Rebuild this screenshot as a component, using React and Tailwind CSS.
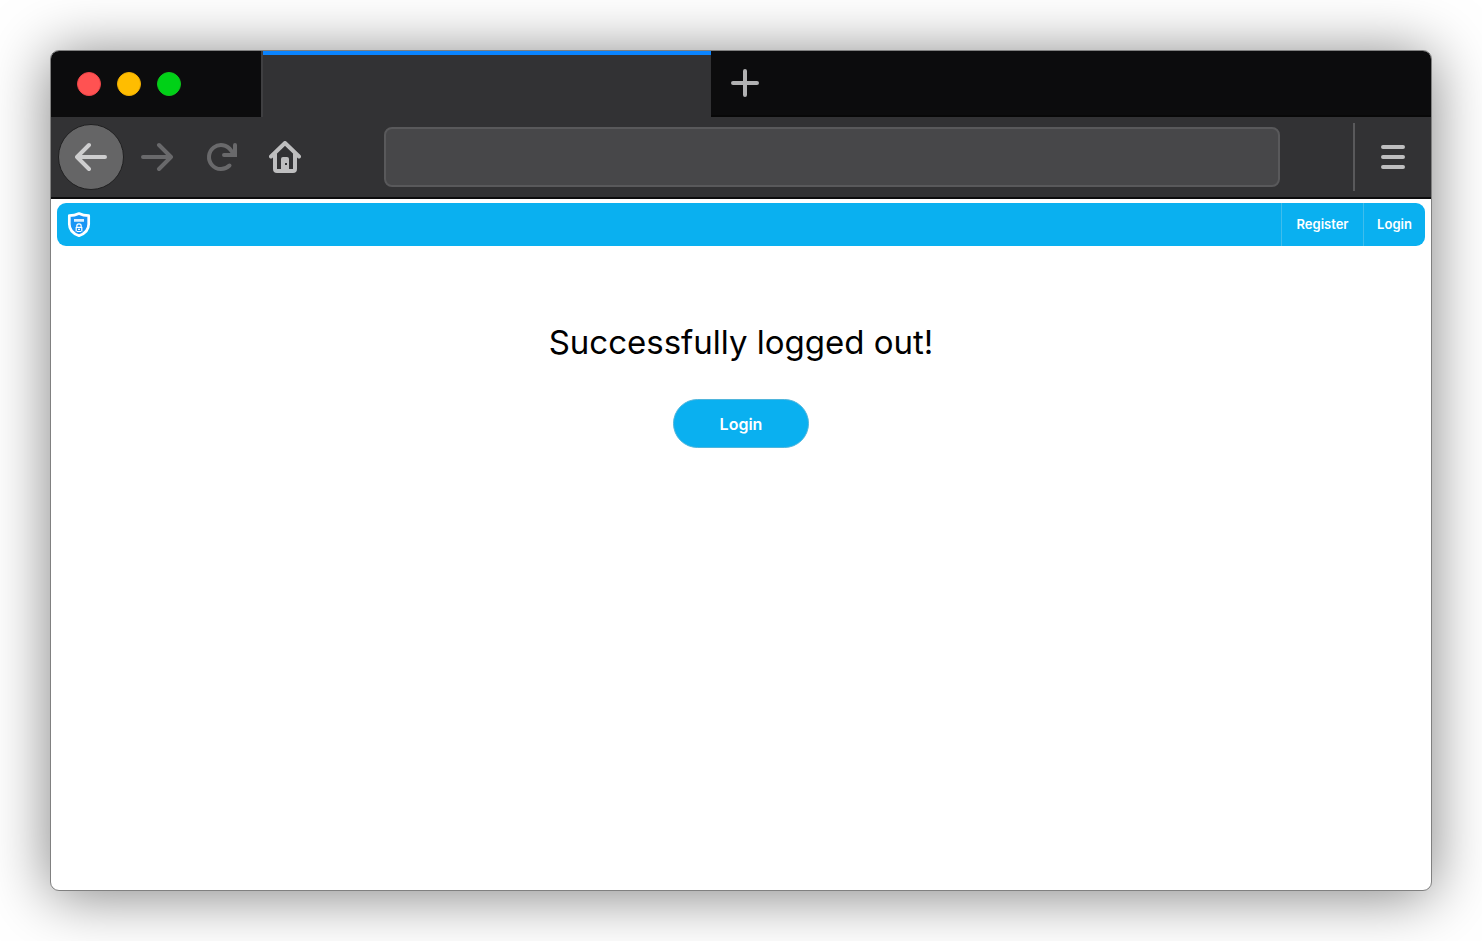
import React from "react";

function BrowserTabs() {
  return (
    <div className="flex h-[66px] bg-[#0c0c0d]">
      <div className="flex w-[210px] shrink-0 items-center gap-4 px-[26px]">
        <button aria-label="Close window" className="size-6 rounded-full border border-[#ee4448] bg-[#ff5252]" />
        <button aria-label="Minimize window" className="size-6 rounded-full border border-[#f0ae00] bg-[#ffbd00]" />
        <button aria-label="Maximize window" className="size-6 rounded-full border border-[#0dc41c] bg-[#00d117]" />
      </div>
      <div className="flex w-[450px] shrink-0 flex-col border-l-2 border-[#3f3f41] bg-[#323234]">
        <div className="h-1 bg-[#0a84ff]" />
      </div>
      <div className="flex grow items-center border-b-2 border-[#080808] px-5">
        <button aria-label="New tab">
          <svg className="size-7" viewBox="0 0 28 28" fill="none" stroke="#b1b1b2" strokeWidth="4" strokeLinecap="round">
            <path d="M14 2v24M2 14h24" />
          </svg>
        </button>
      </div>
    </div>
  );
}

function BrowserToolbar() {
  return (
    <div className="flex h-[82px] items-center border-b-2 border-[#0c0c0d] bg-[#323234] pl-[7px]">
      <div className="flex w-[326px] shrink-0 items-center">
        <button aria-label="Back" className="grid size-[66px] place-items-center rounded-full border border-[#202021] bg-[#656566]">
          <svg className="size-8" viewBox="0 0 32 32" fill="none" stroke="#cececf" strokeWidth="4" strokeLinecap="round" strokeLinejoin="round">
            <path d="M30 16H2M14 4L2 16l12 12" />
          </svg>
        </button>
        <button aria-label="Forward" className="ml-[17px]">
          <svg className="size-8" viewBox="0 0 32 32" fill="none" stroke="#69696b" strokeWidth="4" strokeLinecap="round" strokeLinejoin="round">
            <path d="M2 16h28M18 4l12 12-12 12" />
          </svg>
        </button>
        <button aria-label="Reload" className="ml-8">
          <svg className="size-8" viewBox="0 0 32 32" fill="none" stroke="#69696b" strokeWidth="4" strokeLinecap="round" strokeLinejoin="round">
            <path d="M24.500 24.500A12 12 0 1 1 26 9.400L28 12" />
            <path d="M30 4v10H19" strokeLinejoin="miter" />
          </svg>
        </button>
        <button aria-label="Home" className="ml-8">
          <svg className="size-8" viewBox="0 0 32 32" fill="none" stroke="#bebebf" strokeWidth="4" strokeLinecap="round" strokeLinejoin="round">
            <path d="M2 15.500L16 2l14 13.500" />
            <path d="M6 13v15q0 2 2 2h16q2 0 2-2V13" />
            <path d="M12 30V18q0-2 2-2h4q2 0 2 2v12z" fill="#bebebf" stroke="none" />
            <path d="M16 22h2v2h-2z" fill="#323234" stroke="none" />
          </svg>
        </button>
      </div>
      <input
        aria-label="Address"
        className="h-[60px] min-w-0 grow rounded-lg border-2 border-[#59595b] bg-[#474749] px-4 text-xl text-white outline-none"
      />
      <div className="ml-[73px] flex h-[68px] shrink-0 items-center border-l-2 border-[#59595b] px-[26px]">
        <button aria-label="Open menu">
          <svg className="h-6 w-6" viewBox="0 0 24 24" fill="none" stroke="#bebebf" strokeWidth="4" strokeLinecap="round">
            <path d="M2 2h20M2 12h20M2 22h20" />
          </svg>
        </button>
      </div>
    </div>
  );
}

function ShieldLogo() {
  return (
    <svg className="h-[26px] w-6" viewBox="0 0 24 26" fill="none">
      <path
        d="M12 1.500C8.800 3 5.600 3.600 2.300 3.700v8.200c0 5.800 3.700 9.600 9.700 11.800 6-2.200 9.700-6 9.700-11.800V3.700C18.400 3.600 15.200 3 12 1.500z"
        fill="#1a96f5"
        stroke="#fff"
        strokeWidth="2.700"
        strokeLinejoin="round"
      />
      <path d="M7 7h10v2.800H7z" fill="#fff" fillOpacity=".85" />
      <path d="M9.800 15.500V14a2.200 2.200 0 0 1 4.400 0v1.500" stroke="#fff" strokeWidth="1.200" />
      <path d="M9.500 15.300h5M9.200 15v4.500M14.800 15v4.500M10 19.500h4" stroke="#fff" strokeWidth="1.200" />
      <path d="M11 17.300h2" stroke="#fff" strokeWidth="1.200" />
    </svg>
  );
}

function SiteNav() {
  return (
    <nav className="flex h-[43px] items-stretch rounded-[9px] bg-[#0ab0f0] text-[13px] font-semibold text-white">
      <a href="#home" aria-label="Home page" className="mr-auto flex items-center px-[10px]">
        <ShieldLogo />
      </a>
      <a href="#register" className="flex w-[82px] items-center justify-center border-l border-[#3fbdec]">
        Register
      </a>
      <a href="#login" className="flex w-[62px] items-center justify-center border-l border-[#3fbdec]">
        Login
      </a>
    </nav>
  );
}

export default function App() {
  return (
    <div className="flex min-h-screen bg-white p-[50px] font-['Inter',sans-serif]">
      <div className="flex min-w-0 grow flex-col overflow-hidden rounded-[9px] border border-[#808080] bg-white shadow-[0_4px_60px_rgba(0,0,0,0.5)]">
        <BrowserTabs />
        <BrowserToolbar />
        <div className="px-[6px] pt-1">
          <SiteNav />
        </div>
        <main className="flex flex-col items-center pt-[72px]">
          <h1 className="text-[33px] leading-[49px] text-black">Successfully logged out!</h1>
          <button className="mt-8 h-[49px] w-[136px] rounded-full border border-[#4fb5dc] bg-[#0ab0f0] text-base font-semibold text-white">
            Login
          </button>
        </main>
      </div>
    </div>
  );
}
